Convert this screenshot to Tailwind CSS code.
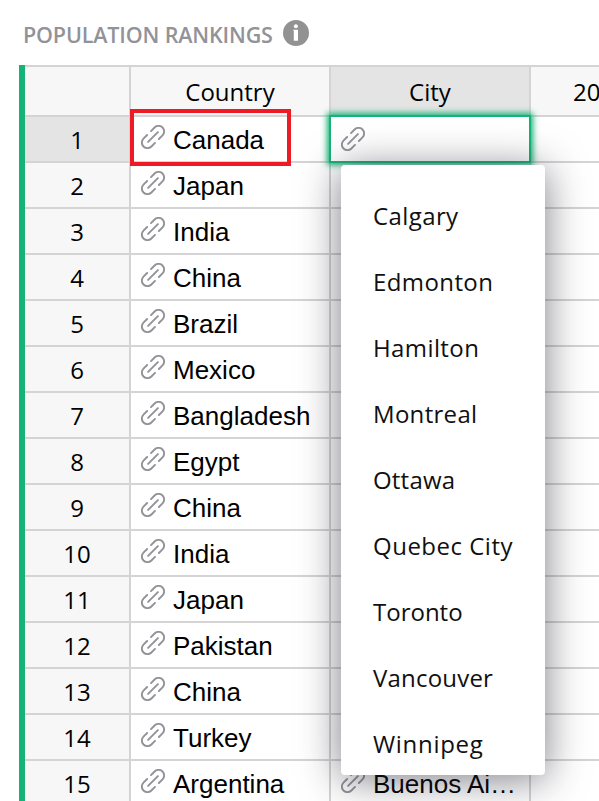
<!DOCTYPE html>
<html lang="en">
<head>
<meta charset="utf-8">
<title>Population Rankings</title>
<script src="https://cdn.jsdelivr.net/npm/@tailwindcss/browser@4"></script>
</head>
<body class="bg-white">
<svg class="hidden">
  <symbol id="link" viewBox="0 0 24 24">
    <g fill="none" stroke="#929299" stroke-width="1.9" stroke-linecap="round">
      <path d="M10 6.1l3.6-3.6a5.55 5.55 0 0 1 7.9 7.9l-3.6 3.6"/>
      <path d="M14 17.9l-3.6 3.6a5.55 5.55 0 0 1-7.9-7.9l3.6-3.6"/>
      <path d="M7.1 16.9l9.8-9.8"/>
    </g>
  </symbol>
</svg>
<div class="relative h-[801px] w-[599px] overflow-hidden bg-white font-['Open_Sans',sans-serif] text-[24px] text-black">
  <header class="flex h-[65px] items-center gap-[10px] pl-[23px]">
    <h1 class="mt-[4px] w-[250px] whitespace-nowrap text-[21.5px] font-semibold leading-[30px] tracking-[-0.15px] text-[#929299]">POPULATION RANKINGS</h1>
    <svg class="size-[26px]" viewBox="0 0 26 26"><circle cx="13" cy="13" r="13" fill="#929292"/><circle cx="12.9" cy="6.3" r="2" fill="#fff"/><path d="M10.3 9.7h4.7v11h-4.2v-9.9h-.5z" fill="#fff"/></svg>
  </header>

  <main class="ml-[19px] h-[736px] overflow-hidden border-l-[6px] border-[#16b378]">
    <div class="flex h-[52px] w-[606px] border-y-2 border-[#d4d4d4] bg-[#f7f7f7] text-center leading-[50px]">
      <div class="w-[106px] shrink-0 border-r-2 border-[#d4d4d4]"></div>
      <div class="w-[200px] shrink-0 border-r-2 border-[#d4d4d4]">Country</div>
      <div class="w-[200px] shrink-0 border-r-2 border-[#d4d4d4] bg-[#e4e4e4]">City</div>
      <div class="pl-[42px]">20</div>
    </div>
    <div id="rows"></div>
  </main>

  <div class="absolute left-[329px] top-[115px] h-[48px] w-[202px] border-2 border-[#16b378] bg-white pl-[10px] pt-[10px] shadow-[0_0_6px_2px_#16b378]">
    <svg class="size-6"><use href="#link"/></svg>
  </div>
  <div class="absolute left-[130px] top-[109px] h-[57px] w-[161px] border-4 border-[#ed1c24]"></div>

  <ul class="absolute left-[341px] top-[165px] h-[610px] w-[204px] rounded-[4px] bg-white pl-[32px] pt-[18px] leading-[66px] tracking-[0.4px] text-[#101010] shadow-[0_4px_40px_rgba(38,38,51,0.6)]">
    <li>Calgary</li>
    <li>Edmonton</li>
    <li>Hamilton</li>
    <li class="tracking-[0.3px]">Montreal</li>
    <li class="tracking-[0.2px]">Ottawa</li>
    <li class="tracking-[0.5px]">Quebec City</li>
    <li class="tracking-[0px]">Toronto</li>
    <li class="tracking-[0.2px]">Vancouver</li>
    <li class="tracking-[0.7px]">Winnipeg</li>
  </ul>
</div>
<script>
const countries = ['Canada','Japan','India','China','Brazil','Mexico','Bangladesh','Egypt','China','India','Japan','Pakistan','China','Turkey','Argentina'];
const cell = t => `<svg class="mt-2 size-6 shrink-0"><use href="#link"/></svg><span class="ml-[8px] w-[146px] overflow-hidden text-ellipsis whitespace-nowrap font-['Liberation_Sans',sans-serif] text-[26px] leading-[46px]">${t}</span>`;
document.getElementById('rows').innerHTML = countries.map((c, i) => `
  <div class="flex h-[46px] w-[606px] border-b-2 border-[#d4d4d4]">
    <div class="w-[106px] shrink-0 border-r-2 border-[#d4d4d4] text-center leading-[46px] ${i === 0 ? 'bg-[#e4e4e4]' : 'bg-[#f7f7f7]'}">${i + 1}</div>
    <div class="flex w-[200px] shrink-0 border-r-2 border-[#d4d4d4] pl-[10px]">${cell(c)}</div>
    <div class="flex w-[200px] shrink-0 border-r-2 border-[#d4d4d4] pl-[10px]">${i === 14 ? cell('Buenos Ai…') : ''}</div>
  </div>`).join('');
</script>
</body>
</html>
